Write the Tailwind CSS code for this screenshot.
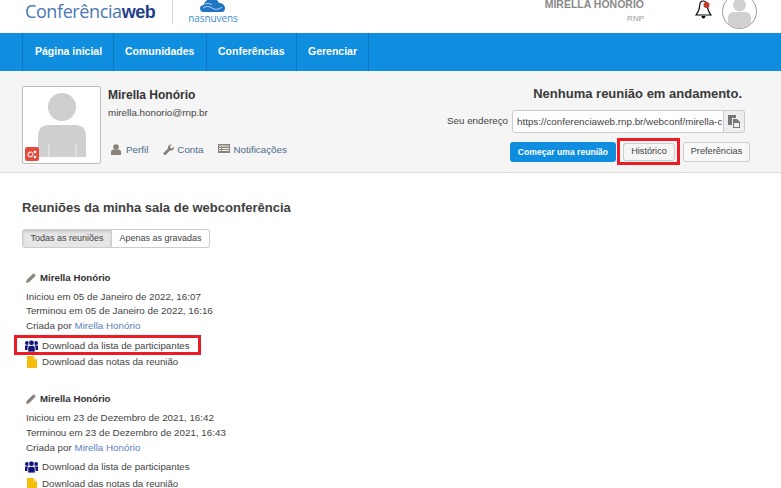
<!DOCTYPE html>
<html lang="pt-BR">
<head>
  <meta charset="UTF-8" />
  <title>Conferência Web</title>
  <script src="https://cdn.jsdelivr.net/npm/@tailwindcss/browser@4"></script>
</head>
<body>
  <div class="relative w-[781px] h-[488px] overflow-hidden bg-white font-['Liberation_Sans',Arial,sans-serif] text-[#333]">
    <!-- topo -->
    <header class="h-[33px] flex items-start overflow-hidden">
      <div class="ml-[25px] flex items-baseline text-[18px] leading-[22px] text-[#4a78b5] w-[131px]">
        <span class="font-['Open_Sans',sans-serif] tracking-[-0.4px]">Conferência</span><span class="font-bold text-[#1f3f86] tracking-[-0.4px]">web</span>
      </div>
      <div class="ml-[16px] w-px h-[24px] bg-[#d8d8d8]"></div>
      <div class="ml-[14px] w-[52px] flex flex-col items-center">
        <svg class="w-[26px] h-[13px] -mt-[1px]" viewBox="0 0 26 13"><path fill="#1f74c4" d="M3 13c-2 0-3-2-3-4s2-3 4-3c0-3 3-6 8-6 3 0 6 1 7 4 3 0 6 2 6 5 0 2-1 4-3 4z"/><path fill="none" stroke="#fff" stroke-width=".7" d="M3 9c3-2 6-2 9 0s6 2 10-1M5 5c2-1 5-1 7 1"/></svg>
        <span class="text-[10px] leading-[10px] mt-[1px] text-[#3d8fd0] font-['Open_Sans',sans-serif] tracking-[-0.1px]">nasnuvens</span>
      </div>
      <div class="ml-auto flex items-start">
        <div class="flex flex-col items-end -mt-[2px] mr-[51px]">
          <span class="text-[10.5px] leading-[13px] font-bold text-[#8a8a8a]">MIRELLA HONÓRIO</span>
          <span class="text-[8px] leading-[10px] mt-[3px] text-[#999]">RNP</span>
        </div>
        <div class="mr-[10px] w-[17px] h-[19px]">
          <svg class="w-[17px] h-[19px]" viewBox="0 0 17 19"><path fill="#fff" stroke="#000" stroke-width="1.100" d="M8.500 1c-2.500 0-3.800 2-3.800 4.500 0 4.500-1.700 7-3.700 9.500h15c-2-2.500-3.700-5-3.700-9.500C12.300 3 11 1 8.500 1z"/><path fill="#000" d="M6.500 16h4c0 1.500-.8 2.500-2 2.500s-2-1-2-2.500z"/><circle cx="11.500" cy="5" r="3" fill="#c0392b"/></svg>
        </div>
        <div class="-mt-[6px] mr-[24px] w-[35px] h-[35px] rounded-full border border-[#999] bg-white overflow-hidden flex justify-center">
          <svg class="w-[25px] h-[30px] mt-[3px]" viewBox="0 0 25 30"><circle cx="12.500" cy="7" r="6.500" fill="#d0d0d0"/><path fill="#d0d0d0" d="M1 30V20c0-4 3-6 6-6h11c3 0 6 2 6 6v10z"/></svg>
        </div>
      </div>
    </header>

    <!-- menu -->
    <nav class="h-[38px] bg-[#0f8ee0] pl-[22px] flex text-white text-[10.5px] font-bold">
      <a class="w-[92px] h-full pl-[12px] flex items-center border-x border-[#0b78c2]">Página inicial</a>
      <a class="w-[93px] h-full pl-[11px] flex items-center border-r border-[#0b78c2]">Comunidades</a>
      <a class="w-[90px] h-full pl-[11px] flex items-center border-r border-[#0b78c2]">Conferências</a>
      <a class="w-[72px] h-full pl-[11px] flex items-center border-r border-[#0b78c2]">Gerenciar</a>
    </nav>

    <!-- painel do usuario -->
    <section class="h-[102px] bg-[#f5f5f5] border-b border-[#ddd] pl-[22px] pr-[31px] pt-[15px] flex">
      <div class="relative w-[79px] h-[78px] bg-white border border-[#bdbdbd] rounded-[2px] flex justify-center">
        <svg class="w-[48px] h-[64px] mt-[6px]" viewBox="0 0 48 64"><circle cx="24" cy="14" r="14" fill="#cfcfd0"/><path fill="#cfcfd0" d="M0 64V44c0-10 5-12 12-12h24c7 0 12 2 12 12v20z"/><path fill="#eee" d="M10.500 50h1v14h-1zM37.500 50h1v14h-1z"/></svg>
        <div class="absolute left-[2px] bottom-[2px] w-[14px] h-[14px] rounded-[2px] bg-[#e04b3c] flex items-center justify-center">
          <svg class="w-[10px] h-[9px]" viewBox="0 0 10 9"><circle cx="3.500" cy="4.500" r="2.300" fill="none" stroke="#fff" stroke-width="1.400" stroke-dasharray="1.200 .4"/><circle cx="8" cy="2" r="1.300" fill="#fff"/><circle cx="8" cy="7" r="1.300" fill="#fff"/></svg>
        </div>
      </div>
      <div class="ml-[7px] flex flex-col">
        <h2 class="text-[12px] leading-[14px] mt-[2px] font-bold text-[#333]">Mirella Honório</h2>
        <p class="text-[9.800px] leading-[12px] mt-[5px] text-[#444]">mirella.honorio@rnp.br</p>
        <div class="mt-[25px] flex items-center text-[9.800px] leading-[12px] text-[#4a6a8a]">
          <a class="ml-[3px] flex items-center gap-[5px]">
            <svg class="w-[10px] h-[11px] -mt-[2px]" viewBox="0 0 10 11"><circle cx="5" cy="3" r="2.800" fill="#8a8178"/><path fill="#8a8178" d="M0 11V8c0-1.500 1-2.500 2.500-2.500h5C9 5.500 10 6.500 10 8v3z"/></svg>
            Perfil
          </a>
          <a class="ml-[15px] flex items-center gap-[3px]">
            <svg class="w-[11px] h-[11px] -mt-[2px]" viewBox="0 0 11 11"><path fill="#8a8178" d="M0 9.500 5 4.500C4.500 2.500 6 0 9 0.500L7 2.500l.5 1.500 1.500.5 2-2c.5 3-2 4.500-4 4L2 11.500z"/></svg>
            Conta
          </a>
          <a class="ml-[15px] flex items-center gap-[3px]">
            <svg class="w-[12px] h-[9px] -mt-[3px]" viewBox="0 0 12 9"><path fill="#8a8178" d="M0 0h12v9H0z"/><path fill="#f5f5f5" d="M1 1.500h10v1H1zM1 4h2v1H1zM4 4h7v1H4zM1 6h2v1H1zM4 6h7v1H4z"/></svg>
            Notificações
          </a>
        </div>
      </div>
      <div class="ml-auto flex flex-col items-end">
        <h2 class="text-[13px] leading-[15px] font-bold text-[#3a3a3a] mr-[8px]">Nenhuma reunião em andamento.</h2>
        <div class="mt-[9px] mr-[5px] flex items-center">
          <label class="text-[9.800px] text-[#444] mr-[4px]">Seu endereço</label>
          <div class="h-[23px] w-[212px] bg-white border border-[#ccc] rounded-l-[3px] pl-[4px] overflow-hidden whitespace-nowrap text-[9.800px] leading-[21px] text-[#444]">https://conferenciaweb.rnp.br/webconf/mirella-c</div>
          <div class="h-[23px] w-[21px] bg-[#eee] border border-l-0 border-[#ccc] rounded-r-[3px] flex items-center justify-center">
            <svg class="w-[12px] h-[13px]" viewBox="0 0 12 13"><path fill="#777" d="M0 0h8v3H4v7H0z"/><path fill="#777" d="M5 4h4l3 3v6H5z"/><path fill="#eee" d="M6 8h5v4H6z"/></svg>
          </div>
        </div>
        <div class="mt-[9px] flex items-start">
          <button class="h-[20px] w-[106px] rounded-[3px] bg-[#0f8ee0] text-white font-bold text-[8.600px]">Começar uma reunião</button>
          <button class="ml-[7px] mt-[1px] h-[18px] w-[52px] rounded-[3px] border border-[#ccc] bg-[#f5f5f5] text-[#444] text-[9.200px]">Histórico</button>
          <button class="ml-[8px] h-[20px] w-[67px] rounded-[3px] border border-[#ccc] bg-[#f8f8f8] text-[#444] text-[9.200px]">Preferências</button>
        </div>
      </div>
    </section>

    <!-- reunioes -->
    <main class="pl-[22px] pt-[27px]">
      <h3 class="text-[13px] leading-[15px] font-bold text-[#3f3f3f]">Reuniões da minha sala de webconferência</h3>
      <div class="mt-[14px] flex w-[188px] h-[19px] text-[9px] text-[#444]">
        <button class="w-[90px] bg-[#e6e6e6] border border-[#ccc] rounded-l-[3px] shadow-[inset_0_2px_3px_rgba(0,0,0,0.12)]">Todas as reuniões</button>
        <button class="w-[98px] bg-white border border-l-0 border-[#ccc] rounded-r-[3px]">Apenas as gravadas</button>
      </div>

      <article class="mt-[24px] text-[9.800px] text-[#444]">
        <div class="flex items-center h-[12px]">
          <svg class="w-[10px] h-[10px] ml-[4px]" viewBox="0 0 10 10"><path fill="#8a8178" d="M0 10l.7-3L7 .7 9.300 3 3 9.300zM7.700 0 10 2.300 9.500 2.800 7.200.500z"/></svg>
          <span class="ml-[4px] font-bold text-[#333] text-[9.700px]">Mirella Honório</span>
        </div>
        <p class="ml-[4px] leading-[14px] mt-[6px]">Iniciou em 05 de Janeiro de 2022, 16:07</p>
        <p class="ml-[4px] leading-[14px]">Terminou em 05 de Janeiro de 2022, 16:16</p>
        <p class="ml-[4px] leading-[14px] mt-[1px]">Criada por <a class="text-[#5b7fbf]">Mirella Honório</a></p>
        <p class="flex items-center h-[14px] mt-[6px] text-[9.700px]">
          <svg class="w-[13px] h-[12px] ml-[3px] mr-[4px]" viewBox="0 0 13 12"><g fill="#12127a"><circle cx="2" cy="3" r="2"/><circle cx="11" cy="3" r="2"/><path d="M0 5.500h3.500V10H0zM9.500 5.500H13V10H9.500z"/><circle cx="6.500" cy="2.800" r="2.800" stroke="#fff" stroke-width=".8"/><path stroke="#fff" stroke-width=".8" d="M2.800 12V8c0-1.500 1-2.500 2.500-2.500h2.400c1.500 0 2.500 1 2.500 2.500v4z"/></g></svg>
          Download da lista de participantes
        </p>
        <p class="flex items-center h-[14px] mt-[2px] text-[9.700px]">
          <svg class="w-[10px] h-[12px] ml-[5px] mr-[5px]" viewBox="0 0 10 12"><path fill="#f5bd0b" d="M0 0h6.500L10 3.500V12H0z"/><path fill="#fbe08a" d="M6.500 0 10 3.500H6.500z"/></svg>
          Download das notas da reunião
        </p>
      </article>

      <article class="mt-[24px] text-[9.800px] text-[#444]">
        <div class="flex items-center h-[12px]">
          <svg class="w-[10px] h-[10px] ml-[4px]" viewBox="0 0 10 10"><path fill="#8a8178" d="M0 10l.7-3L7 .7 9.300 3 3 9.300zM7.700 0 10 2.300 9.500 2.800 7.200.500z"/></svg>
          <span class="ml-[4px] font-bold text-[#333] text-[9.700px]">Mirella Honório</span>
        </div>
        <p class="ml-[4px] leading-[14px] mt-[6px]">Iniciou em 23 de Dezembro de 2021, 16:42</p>
        <p class="ml-[4px] leading-[14px] mt-[1px]">Terminou em 23 de Dezembro de 2021, 16:43</p>
        <p class="ml-[4px] leading-[14px] mt-[1px]">Criada por <a class="text-[#5b7fbf]">Mirella Honório</a></p>
        <p class="flex items-center h-[14px] mt-[5px] text-[9.700px]">
          <svg class="w-[13px] h-[12px] ml-[3px] mr-[4px]" viewBox="0 0 13 12"><g fill="#12127a"><circle cx="2" cy="3" r="2"/><circle cx="11" cy="3" r="2"/><path d="M0 5.500h3.500V10H0zM9.500 5.500H13V10H9.500z"/><circle cx="6.500" cy="2.800" r="2.800" stroke="#fff" stroke-width=".8"/><path stroke="#fff" stroke-width=".8" d="M2.800 12V8c0-1.500 1-2.500 2.500-2.500h2.400c1.500 0 2.500 1 2.500 2.500v4z"/></g></svg>
          Download da lista de participantes
        </p>
        <p class="flex items-center h-[14px] mt-[3px] text-[9.700px]">
          <svg class="w-[10px] h-[12px] ml-[5px] mr-[5px]" viewBox="0 0 10 12"><path fill="#f5bd0b" d="M0 0h6.500L10 3.500V12H0z"/><path fill="#fbe08a" d="M6.500 0 10 3.500H6.500z"/></svg>
          Download das notas da reunião
        </p>
      </article>
    </main>

    <!-- marcacoes em vermelho sobre a tela -->
    <div class="absolute left-[617px] top-[138px] w-[63px] h-[27px] border-[3px] border-[#ed1c24]"></div>
    <div class="absolute left-[14px] top-[335px] w-[187px] h-[20px] border-[3px] border-[#ed1c24]"></div>
  </div>
</body>
</html>
